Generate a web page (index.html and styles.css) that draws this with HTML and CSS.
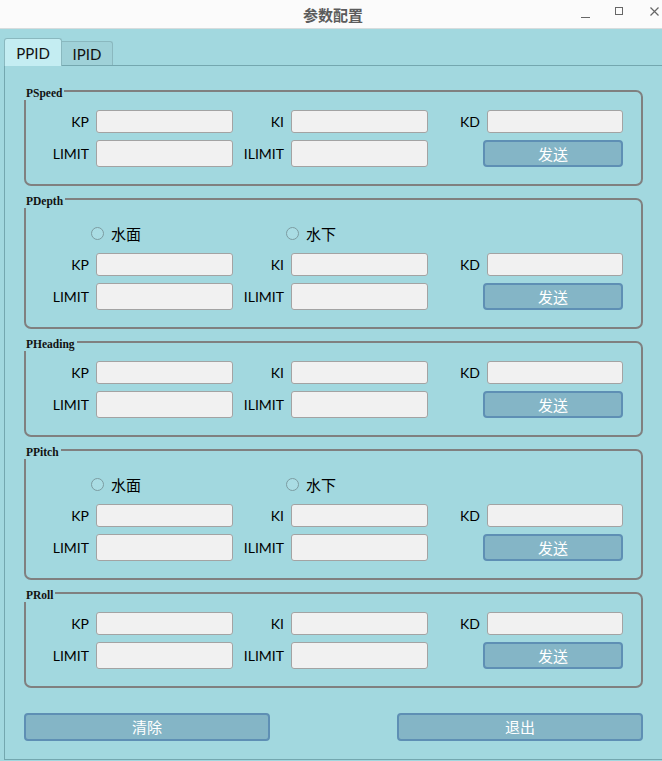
FILE: index.html
```html
<!DOCTYPE html>
<html lang="zh-CN">
<head>
  <meta charset="UTF-8">
  <title>参数配置</title>
  <link rel="stylesheet" href="styles.css">
</head>
<body>
  <div class="titlebar">
    <span class="title">参数配置</span>
    <div class="win-controls">
      <span class="win-btn min"></span>
      <span class="win-btn max"></span>
      <span class="win-btn close">
        <svg width="9" height="9" viewBox="0 0 9 9"><path d="M0.5 0.5 L8.5 8.5 M8.5 0.5 L0.5 8.5" stroke="#666" stroke-width="1.2" fill="none"/></svg>
      </span>
    </div>
  </div>

  <div class="tabs">
    <div class="tab active">PPID</div>
    <div class="tab">IPID</div>
  </div>

  <div class="pane">
    <!-- PSpeed -->
    <div class="group">
      <span class="group-title">PSpeed</span>
      <div class="group-body">
        <label class="lbl">KP</label><input class="field">
        <label class="lbl">KI</label><input class="field">
        <label class="lbl">KD</label><input class="field">
        <label class="lbl">LIMIT</label><input class="field tall">
        <label class="lbl">ILIMIT</label><input class="field tall">
        <span></span><button class="btn send">发送</button>
      </div>
    </div>

    <!-- PDepth -->
    <div class="group">
      <span class="group-title">PDepth</span>
      <div class="group-body with-radio">
        <span></span>
        <label class="radio"><span class="dot"></span>水面</label>
        <span></span>
        <label class="radio"><span class="dot"></span>水下</label>
        <span></span><span></span>
        <label class="lbl">KP</label><input class="field">
        <label class="lbl">KI</label><input class="field">
        <label class="lbl">KD</label><input class="field">
        <label class="lbl">LIMIT</label><input class="field tall">
        <label class="lbl">ILIMIT</label><input class="field tall">
        <span></span><button class="btn send">发送</button>
      </div>
    </div>

    <!-- PHeading -->
    <div class="group">
      <span class="group-title">PHeading</span>
      <div class="group-body">
        <label class="lbl">KP</label><input class="field">
        <label class="lbl">KI</label><input class="field">
        <label class="lbl">KD</label><input class="field">
        <label class="lbl">LIMIT</label><input class="field tall">
        <label class="lbl">ILIMIT</label><input class="field tall">
        <span></span><button class="btn send">发送</button>
      </div>
    </div>

    <!-- PPitch -->
    <div class="group">
      <span class="group-title">PPitch</span>
      <div class="group-body with-radio">
        <span></span>
        <label class="radio"><span class="dot"></span>水面</label>
        <span></span>
        <label class="radio"><span class="dot"></span>水下</label>
        <span></span><span></span>
        <label class="lbl">KP</label><input class="field">
        <label class="lbl">KI</label><input class="field">
        <label class="lbl">KD</label><input class="field">
        <label class="lbl">LIMIT</label><input class="field tall">
        <label class="lbl">ILIMIT</label><input class="field tall">
        <span></span><button class="btn send">发送</button>
      </div>
    </div>

    <!-- PRoll -->
    <div class="group">
      <span class="group-title">PRoll</span>
      <div class="group-body">
        <label class="lbl">KP</label><input class="field">
        <label class="lbl">KI</label><input class="field">
        <label class="lbl">KD</label><input class="field">
        <label class="lbl">LIMIT</label><input class="field tall">
        <label class="lbl">ILIMIT</label><input class="field tall">
        <span></span><button class="btn send">发送</button>
      </div>
    </div>

    <div class="actions">
      <button class="btn wide">清除</button>
      <button class="btn wide">退出</button>
    </div>
  </div>
</body>
</html>
```

FILE: styles.css
```css
html, body {
  margin: 0;
  padding: 0;
  height: 761px;
  overflow: hidden;
}

body {
  font-family: Lato, "Noto Sans CJK SC", sans-serif;
  font-size: 15px;
  color: #111;
  background-color: #a2d8df;
}

.titlebar {
  position: relative;
  height: 28px;
  background-color: #fbfbfb;
  border-bottom: 1px solid #d6dcdd;
  display: flex;
  align-items: center;
  justify-content: center;
}

.title {
  font-family: "Noto Sans CJK SC", sans-serif;
  font-size: 15px;
  font-weight: bold;
  color: #5c5c5c;
  margin-left: 4px;
}

.win-controls {
  position: absolute;
  top: 0;
  right: 0;
  height: 28px;
  display: flex;
  align-items: center;
}

.win-btn {
  display: block;
  box-sizing: border-box;
}

.win-btn.min {
  width: 9px;
  height: 1px;
  background-color: #666;
  margin-top: 6px;
  margin-right: 25px;
}

.win-btn.max {
  width: 8px;
  height: 8px;
  border: 1px solid #666;
  margin-top: -6px;
  margin-right: 27px;
}

.win-btn.close {
  width: 9px;
  height: 9px;
  margin-top: -6px;
  margin-right: 3px;
}

.win-btn.close svg {
  display: block;
}

.tabs {
  position: relative;
  z-index: 1;
  display: flex;
  align-items: flex-end;
  height: 37px;
  padding-left: 4px;
  margin-bottom: -1px;
}

.tab {
  box-sizing: border-box;
  width: 51px;
  height: 24px;
  margin-bottom: 1px;
  text-align: center;
  line-height: 24px;
  background-color: #9fd1d8;
  border: 1px solid #8ab8bf;
  border-bottom: none;
  border-left: none;
  border-radius: 0 3px 0 0;
}

.tab.active {
  width: 58px;
  height: 28px;
  margin-bottom: 0;
  line-height: 28px;
  padding-bottom: 2px;
  background-color: #c4edf2;
  border-left: 1px solid #8ab8bf;
  border-radius: 3px 3px 0 0;
}

.pane {
  width: 658px;
  margin-left: 4px;
  padding: 24px 0 18px 19px;
  border-top: 1px solid #74a7af;
  border-left: 1px solid #74a7af;
  border-bottom: 1px solid #74a7af;
  box-sizing: border-box;
}

.group {
  position: relative;
  box-sizing: border-box;
  width: 619px;
  margin-bottom: 12px;
  border: 2px solid #808080;
  border-radius: 7px;
}

.group-title {
  position: absolute;
  top: -6px;
  left: -2px;
  height: 14px;
  padding: 0 2px;
  line-height: 14px;
  font-family: "Liberation Serif", serif;
  font-size: 11.5px;
  font-weight: bold;
  background-color: #a2d8df;
  color: #111;
}

.group-body {
  display: grid;
  grid-template-columns: 70px 137px 58px 137px 59px 136px;
  grid-template-rows: 23px 27px;
  row-gap: 7px;
  padding: 18px 0 17px;
}

.group-body.with-radio {
  grid-template-rows: 26px 23px 27px;
  padding-top: 20px;
}

.lbl {
  align-self: center;
  text-align: right;
  padding-right: 7px;
  font-size: 14px;
  line-height: 18px;
  white-space: nowrap;
  color: #000;
}

.field {
  box-sizing: border-box;
  width: 100%;
  height: 100%;
  margin: 0;
  padding: 0 4px;
  background-color: #f1f1f1;
  border: 1px solid #a3a3a3;
  border-radius: 3px;
  font: inherit;
}

.radio {
  display: flex;
  align-items: center;
  gap: 7px;
  margin-left: -5px;
  white-space: nowrap;
  font-family: "Noto Sans CJK SC", sans-serif;
  font-size: 15px;
  color: #000;
}

.dot {
  box-sizing: border-box;
  width: 13px;
  height: 13px;
  border: 1px solid #7c9ca1;
  border-radius: 50%;
  background-color: #aadde4;
}

.btn {
  box-sizing: border-box;
  margin: 0;
  padding: 0;
  background-color: #84b5c6;
  border: 2px solid #5e8fb4;
  border-radius: 4px;
  color: #fff;
  font-family: "Noto Sans CJK SC", sans-serif;
  font-size: 15px;
  line-height: 22px;
}

.btn.send {
  width: 140px;
  height: 27px;
  margin-left: -4px;
}

.actions {
  display: flex;
  justify-content: space-between;
  width: 619px;
  margin-top: 25px;
}

.btn.wide {
  width: 246px;
  height: 28px;
}
```
